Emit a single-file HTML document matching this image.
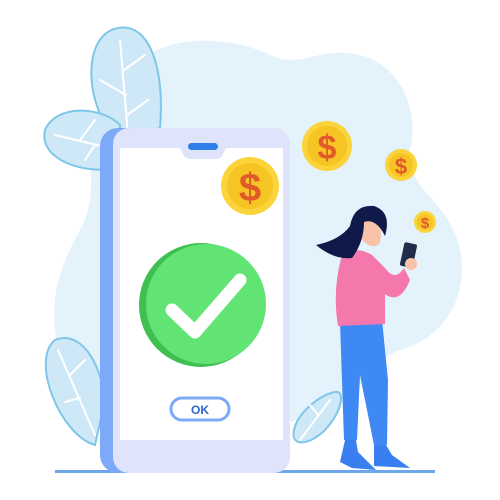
<!DOCTYPE html>
<html><head><style>html,body{margin:0;padding:0;background:#fff;width:500px;height:500px;overflow:hidden}</style></head>
<body>
<svg width="500" height="500" viewBox="0 0 500 500" xmlns="http://www.w3.org/2000/svg">
<path d="M140 60 C180 30 240 40 270 55 C300 70 320 45 360 55 C400 65 420 110 410 150 C405 190 450 200 460 250 C470 300 440 340 400 350 C370 360 360 400 320 415 C280 430 200 420 150 410 C100 400 60 380 55 330 C50 280 70 250 85 220 C100 180 80 140 100 110 C110 90 120 75 140 60 Z" fill="#e4f2fc"/>
<g fill="#cfe8f8" stroke="#7fc6e8" stroke-width="2">
<path d="M118 28 C150 22 165 70 160 128 L118 140 C85 110 80 35 118 28 Z"/>
<path d="M45 130 C55 105 100 105 120 125 L118 168 C85 175 38 160 45 130 Z"/>
<path d="M55 340 C80 330 100 360 105 400 L95 445 C60 435 30 360 55 340 Z"/>
<path d="M335 392 C345 390 343 410 325 430 C310 445 290 448 294 430 C298 412 320 395 335 392 Z"/>
</g>
<g fill="none" stroke="#fff" stroke-width="2" stroke-linecap="round">
<path d="M120 40 L128 135 M124 70 L145 55 M126 95 L100 80 M127 115 L148 100"/>
<path d="M55 135 L118 150 M80 140 L95 120 M95 145 L85 160"/>
<path d="M58 350 L95 435 M70 375 L85 360 M80 398 L65 402"/>
<path d="M330 400 L300 440 M318 415 L310 405"/>
</g>
<rect x="55" y="470" width="180" height="3" fill="#6ea6ee"/>
<rect x="245" y="470" width="190" height="3" fill="#6ea6ee"/>
<rect x="100" y="128" width="180" height="345" rx="18" fill="#7caaf8"/>
<rect x="113" y="128" width="177" height="345" rx="16" fill="#dfe3fc"/>
<rect x="120" y="148" width="163" height="292" fill="#fff"/>
<path d="M180 148 L226 148 L222 156 Q220 159 215 159 L191 159 Q186 159 184 156 Z" fill="#dfe3fc"/>
<rect x="188" y="143" width="30" height="7" rx="3.5" fill="#2f7fe8"/>
<circle cx="201" cy="305" r="62" fill="#3fbf4f"/>
<circle cx="206" cy="304" r="60" fill="#62e474"/>
<path d="M172 310 L195 332 L240 280" fill="none" stroke="#fff" stroke-width="13" stroke-linecap="round" stroke-linejoin="round"/>
<rect x="171" y="398" width="58" height="22" rx="11" fill="#fff" stroke="#7caaf8" stroke-width="3"/>
<text x="200" y="414" font-family="Liberation Sans, sans-serif" font-size="12" font-weight="bold" fill="#2f66c8" text-anchor="middle">OK</text>
<g font-family="Liberation Sans, sans-serif" font-weight="bold" fill="#e05a2a" text-anchor="middle">
<circle cx="250" cy="186" r="29" fill="#fbd33a"/><circle cx="250" cy="186" r="23" fill="#f6c423"/>
<text x="250" y="201" font-size="40">$</text>
<circle cx="327" cy="146" r="25" fill="#fbd33a"/><circle cx="327" cy="146" r="20" fill="#f6c423"/>
<text x="327" y="159" font-size="34">$</text>
<circle cx="401" cy="165" r="16" fill="#fbd33a"/><circle cx="401" cy="165" r="12" fill="#f6c423"/>
<text x="401" y="174" font-size="22">$</text>
<circle cx="425" cy="222" r="11" fill="#fbd33a"/><circle cx="425" cy="222" r="8" fill="#f6c423"/>
<text x="425" y="228" font-size="15">$</text>
</g>
<!-- woman -->
<path d="M382 320 L340 322 L344 440 L357 440 L360 375 L374 445 L387 445 L388 380 Z" fill="#3f89f4"/>
<path d="M345 440 L340 462 L352 468 L376 470 L358 452 L356 440 Z" fill="#3a7ff0"/>
<path d="M374 445 L374 466 L410 468 L392 455 L386 445 Z" fill="#3a7ff0"/>
<path d="M342 255 Q355 245 372 255 L385 268 Q395 282 404 268 L410 280 Q400 305 385 294 L385 324 L338 326 Q332 290 342 255 Z" fill="#f478ab"/>
<rect x="402" y="243" width="13" height="24" rx="2" transform="rotate(12 408 255)" fill="#1f2d4a"/>
<circle cx="411" cy="264" r="6" fill="#f8c3a8"/>
<path d="M358 236 Q354 220 370 216 Q384 220 380 243 Q372 252 358 236 Z" fill="#f8c3a8"/>
<path d="M350 226 Q354 204 374 206 Q392 212 385 236 Q376 218 364 222 Q364 242 352 258 Q334 260 316 245 Q340 240 350 226 Z" fill="#101a4a"/>
</svg>
</body></html>
